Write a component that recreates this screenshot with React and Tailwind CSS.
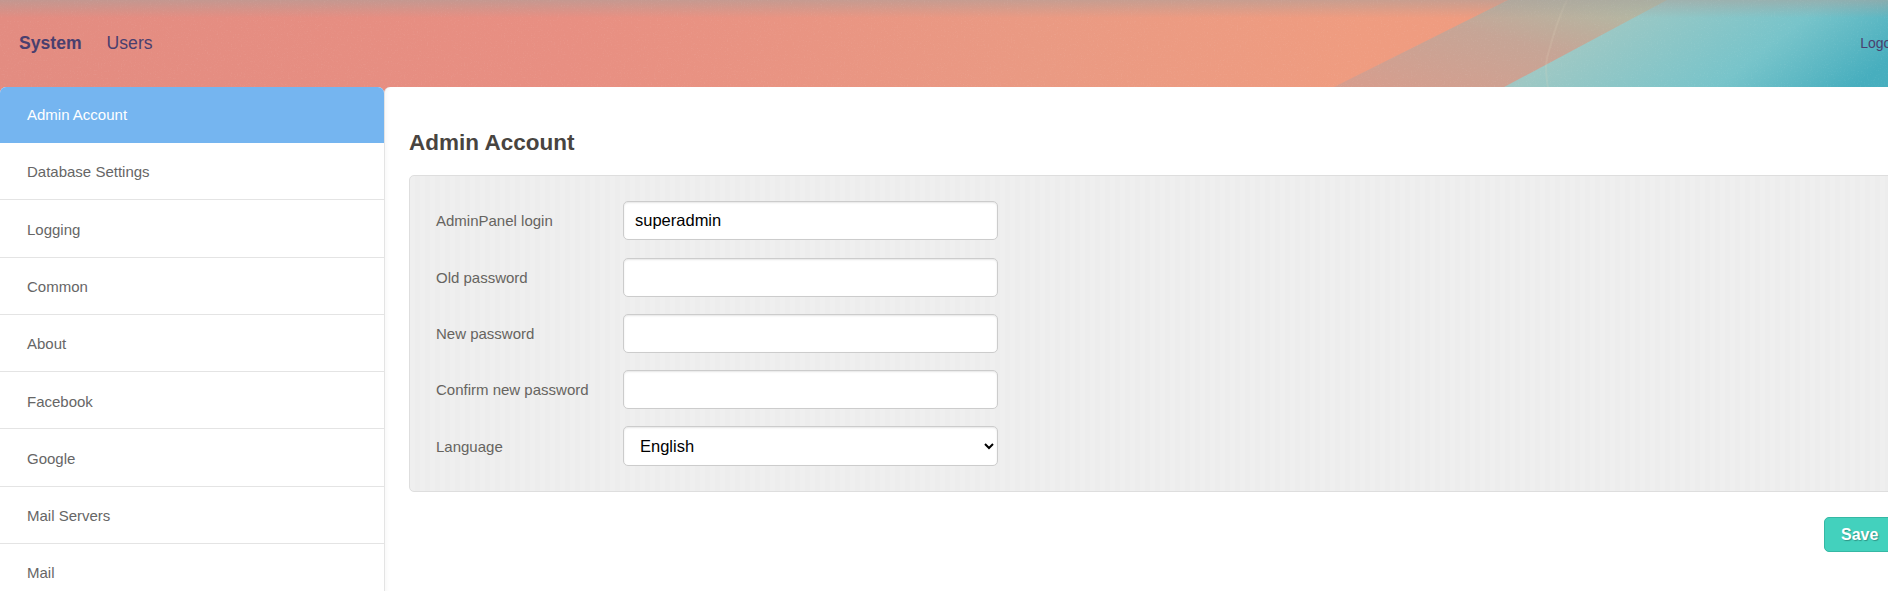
const sideItems = [
  "Admin Account",
  "Database Settings",
  "Logging",
  "Common",
  "About",
  "Facebook",
  "Google",
  "Mail Servers",
  "Mail",
];

const fields = [
  { label: "AdminPanel login", value: "superadmin" },
  { label: "Old password", value: "" },
  { label: "New password", value: "" },
  { label: "Confirm new password", value: "" },
];

function HeaderBackground() {
  return (
    <svg className="absolute left-0 top-0 h-[93px] w-[1888px]" viewBox="0 0 1888 93" preserveAspectRatio="none">
      <defs>
        <linearGradient id="base" x1="0" y1="0" x2="1" y2="0">
          <stop offset="0" stopColor="#e38c81" />
          <stop offset="0.3" stopColor="#e88f82" />
          <stop offset="0.55" stopColor="#ea9a83" />
          <stop offset="0.72" stopColor="#ef9c80" />
          <stop offset="1" stopColor="#ef9c80" />
        </linearGradient>
        <linearGradient id="mid" x1="0" y1="1" x2="1" y2="0">
          <stop offset="0" stopColor="#d99c8c" />
          <stop offset="0.55" stopColor="#c6a596" />
          <stop offset="1" stopColor="#abbfa8" />
        </linearGradient>
        <linearGradient id="teal" x1="0" y1="0.35" x2="1" y2="0.65">
          <stop offset="0" stopColor="#aeb0b0" />
          <stop offset="0.22" stopColor="#9ec8c4" />
          <stop offset="0.68" stopColor="#78c4ca" />
          <stop offset="1" stopColor="#47aebe" />
        </linearGradient>
        <linearGradient id="topBand" x1="0" y1="0" x2="0" y2="1">
          <stop offset="0" stopColor="#a8a09c" stopOpacity="0.55" />
          <stop offset="1" stopColor="#a8a09c" stopOpacity="0" />
        </linearGradient>
        <filter id="grain">
          <feTurbulence type="fractalNoise" baseFrequency="0.7" numOctaves="2" seed="4" />
          <feColorMatrix values="0 0 0 0 1  0 0 0 0 1  0 0 0 0 1  0 0 0 1.1 -0.62" />
        </filter>
      </defs>
      <rect width="1888" height="93" fill="url(#base)" />
      <polygon points="1322,93 1508,0 1680,0 1493,93" fill="url(#mid)" />
      <polygon points="1493,93 1667,0 1888,0 1888,93" fill="url(#teal)" />
      <path d="M1567 0 C1556 22 1552 40 1547 58 C1545 68 1546 78 1549 93" fill="none" stroke="#e6d8c0" strokeOpacity="0.16" strokeWidth="2" />
      <rect width="1888" height="18" fill="url(#topBand)" />
      <rect width="1888" height="93" filter="url(#grain)" opacity="0.18" />
    </svg>
  );
}

export default function App() {
  return (
    <div className="h-[591px] w-[1888px] overflow-hidden bg-white font-['Liberation_Sans',Arial,sans-serif]">
      <header className="relative flex h-[93px] w-[1920px] items-center justify-between pb-[6px] pl-[19px] pr-[17px] text-[#4a3f6e]">
        <HeaderBackground />
        <nav className="relative flex items-center gap-[25px] text-[17.6px]">
          <a className="font-bold">System</a>
          <a>Users</a>
        </nav>
        <a className="relative text-[14px]">Logout</a>
      </header>

      <div className="relative -mt-[6px] flex w-[1920px]">
        <aside className="w-[384px] shrink-0 rounded-t-[6px] bg-white">
          <ul>
            {sideItems.map((item, i) => (
              <li
                key={item}
                className={
                  i === 0
                    ? "flex h-[56px] items-center rounded-t-[6px] bg-[#75b5f0] pl-[27px] pt-[1px] text-[15px] text-white"
                    : "flex h-[57.3px] items-center border-b border-[#e4e4e4] pl-[27px] pt-[3px] text-[15px] text-[#666666]"
                }
              >
                {item}
              </li>
            ))}
          </ul>
        </aside>

        <main className="min-h-[504px] flex-1 rounded-tl-[6px] border-l border-[#e4e4e4] bg-white pl-[24px] pr-[16px] pt-[43px] shadow-[inset_4px_0_4px_-3px_rgba(0,0,0,0.04)]">
          <h1 className="text-[22.5px] font-bold leading-[26px] text-[#484440]">Admin Account</h1>

          <form className="mt-[19px] h-[317px] rounded-[5px] border border-[#dedede] bg-[repeating-linear-gradient(90deg,#efefef_0,#efefef_5px,#ededed_5px,#ededed_10px)] pl-[26px] pt-[25px]">
            <div className="flex flex-col gap-[17px]">
              {fields.map((f, i) => (
                <label
                  key={f.label}
                  className={
                    i === 0
                      ? "mb-[1px] flex h-[39px] items-center text-[15px] text-[#666460]"
                      : "flex h-[39px] items-center text-[15px] text-[#666460]"
                  }
                >
                  <span className="w-[187px] pt-[2px]">{f.label}</span>
                  <input
                    readOnly
                    value={f.value}
                    className="h-full w-[375px] rounded-[5px] border border-[#cccccc] bg-white px-[11px] text-[16.5px] text-black shadow-[inset_0_1px_2px_rgba(0,0,0,0.1)] outline-none"
                  />
                </label>
              ))}
              <label className="flex h-[40px] items-center text-[15px] text-[#666460]">
                <span className="w-[187px] pt-[2px]">Language</span>
                <select
                  defaultValue="English"
                  className="h-full w-[375px] rounded-[5px] border border-[#cccccc] bg-white pl-[12px] text-[16.5px] text-black shadow-[inset_0_1px_2px_rgba(0,0,0,0.1)] outline-none"
                >
                  <option>English</option>
                </select>
              </label>
            </div>
          </form>

          <div className="mt-[25px] flex justify-end">
            <button className="h-[35px] w-[80px] rounded-[5px] border border-[#35b8a4] bg-[#43d1bd] pl-[16px] text-left text-[16px] font-bold text-white [text-shadow:1px_1px_1px_rgba(0,0,0,0.3)]">
              Save
            </button>
          </div>
        </main>
      </div>
    </div>
  );
}
